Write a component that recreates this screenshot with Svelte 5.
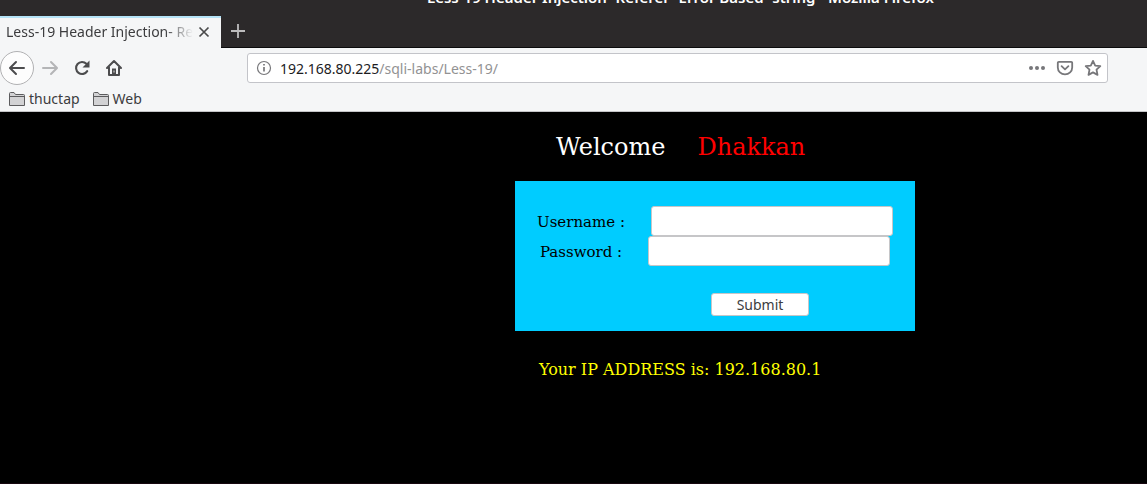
<script lang="ts">
  const bookmarks = ['thuctap', 'Web'];
  let username = $state('');
  let password = $state('');
</script>

<div class="window">
  <header class="titlebar"><span>Less-19 Header Injection- Referer- Error Based- string - Mozilla Firefox</span></header>

  <div class="tabstrip">
    <div class="tab">
      <span class="tab-title">Less-19 Header Injection- Referer</span>
      <button class="icon close" aria-label="Close tab">
        <svg width="14" height="16" viewBox="0 0 14 16"><path d="M2.500 3.500l9 9M11.500 3.500l-9 9" stroke="#4a4a4b" stroke-width="1.7" /></svg>
      </button>
    </div>
    <button class="icon new-tab" aria-label="New tab">
      <svg width="16" height="16" viewBox="0 0 16 16"><path d="M8 1v14M1 8h14" stroke="#bdbcbd" stroke-width="1.8" /></svg>
    </button>
  </div>

  <div class="chrome">
    <div class="toolbar">
      <nav class="nav" aria-label="Navigation">
        <button class="icon back" aria-label="Back">
          <svg width="18" height="18" viewBox="0 0 18 18"><path d="M16 9H2.5M8 3L2 9l6 6" stroke="#4c4c4e" stroke-width="2" stroke-linecap="round" stroke-linejoin="round" /></svg>
        </button>
        <button class="icon" aria-label="Forward">
          <svg width="18" height="18" viewBox="0 0 18 18"><path d="M2 9h13.5M10 3l6 6-6 6" stroke="#b4b5b7" stroke-width="2" stroke-linecap="round" stroke-linejoin="round" /></svg>
        </button>
        <button class="icon" aria-label="Reload">
          <svg width="18" height="18" viewBox="0 0 18 18"><path d="M14.2 12.1A6 6 0 1 1 13.4 4.8" stroke="#4c4c4e" stroke-width="2.1" stroke-linecap="round" /><path d="M16.5 1.5v7h-7z" fill="#4c4c4e" /></svg>
        </button>
        <button class="icon" aria-label="Home">
          <svg width="18" height="18" viewBox="0 0 18 18"><path d="M2 9l7-7 7 7M4 8.5V16h10V8.5" stroke="#4c4c4e" stroke-width="2" stroke-linecap="round" stroke-linejoin="round" /><path d="M7 9.5h4V16H7z" fill="#4c4c4e" /><path d="M9 11.5v2" stroke="#ddd" stroke-width="1" /></svg>
        </button>
      </nav>
      <div class="address">
        <svg width="16" height="16" viewBox="0 0 16 16"><circle cx="8" cy="8" r="6.5" stroke="#77777a" stroke-width="1.2" /><path d="M8 7v4.5M8 4v1.6" stroke="#77777a" stroke-width="1.7" /></svg>
        <span class="url">192.168.80.225<span class="path">/sqli-labs/Less-19/</span></span>
        <button class="icon" aria-label="Page actions">
          <svg width="18" height="18" viewBox="0 0 18 18"><g fill="#77777a"><circle cx="3" cy="9" r="2" /><circle cx="9" cy="9" r="2" /><circle cx="15" cy="9" r="2" /></g></svg>
        </button>
        <button class="icon" aria-label="Save to Pocket">
          <svg width="18" height="18" viewBox="0 0 18 18" stroke="#77777a" stroke-width="1.8" stroke-linejoin="round" stroke-linecap="round"><path d="M2.8 2.9h12.4a1 1 0 0 1 1 1V8.5A7.2 6.9 0 0 1 1.8 8.5V3.9a1 1 0 0 1 1-1z" /><path d="M5.6 7.2L9 10.4l3.4-3.2" /></svg>
        </button>
        <button class="icon" aria-label="Bookmark this page">
          <svg width="18" height="18" viewBox="0 0 18 18"><path d="M9 1.9l2.200 4.700 5.100.6-3.800 3.500 1 5.200L9 13.400l-4.500 2.500 1-5.200L1.700 7.200l5.100-.6z" stroke="#77777a" stroke-width="1.8" stroke-linejoin="round" /></svg>
        </button>
      </div>
    </div>
    <nav class="bookmarks" aria-label="Bookmarks">
      {#each bookmarks as name}
        <button class="bookmark">
          <svg width="16" height="14" viewBox="0 0 16 14"><path d="M.5 13.5V1.5a1 1 0 0 1 1-1H5l1.500 2h8a1 1 0 0 1 1 1v10z" fill="#d2d2d4" stroke="#5c5c5e" /><path d="M1 4.500h14" stroke="#5c5c5e" /></svg>
          {name}
        </button>
      {/each}
    </nav>
  </div>

  <main>
    <div class="content">
      <h1>Welcome <span>Dhakkan</span></h1>
      <form onsubmit={(e) => e.preventDefault()}>
        <div class="field">
          <label for="uname">Username :</label>
          <input id="uname" type="text" bind:value={username} />
        </div>
        <div class="field">
          <label for="passwd">Password :</label>
          <input id="passwd" type="password" bind:value={password} />
        </div>
        <button class="submit" type="submit">Submit</button>
      </form>
      <p>Your IP ADDRESS is: 192.168.80.1</p>
    </div>
  </main>
</div>

<style>
  :global(body) { margin: 0; background: #000; }
  * { box-sizing: border-box; }
  button, input { font: inherit; color: inherit; }
  button { padding: 0; border: 0; background: none; }
  svg { display: block; flex: none; fill: none; }

  .window {
    display: flex;
    flex-direction: column;
    min-height: 100vh;
    font: 14px/20px "Noto Sans", sans-serif;
    color: #3c3c3e;
  }
  .titlebar {
    display: flex;
    align-items: flex-end;
    justify-content: center;
    height: 16px;
    padding: 0 0 9px 214px;
    overflow: hidden;
    background: #2c292a;
    color: #fff;
    font-size: 15px;
    font-weight: 600;
    white-space: nowrap;
  }
  .tabstrip {
    display: flex;
    height: 32px;
    background: #2c292a;
    border-bottom: 1px solid #0c0c0d;
  }
  .tab {
    display: flex;
    align-items: center;
    width: 221px;
    height: 32px;
    padding: 0 10px 2px 6px;
    gap: 4px;
    background: #f5f6f7;
    border-top: 2px solid #b5e3f7;
  }
  .tab-title {
    flex: 1;
    overflow: hidden;
    white-space: nowrap;
    mask-image: linear-gradient(to left, transparent, #000 28px);
  }
  .icon { display: flex; align-items: center; justify-content: center; flex: none; }
  .new-tab { width: 34px; height: 30px; }

  .chrome {
    background: #f5f6f7;
    border-bottom: 1px solid #c3c4c6;
  }
  .toolbar { display: flex; align-items: center; height: 40px; }
  .nav { display: flex; align-items: center; flex: none; width: 247px; }
  .nav .icon { width: 32px; height: 32px; }
  .nav .back {
    width: 34px;
    height: 34px;
    border: 1px solid #b1b1b3;
    border-radius: 50%;
    background: #fdfdfd;
  }
  .address {
    display: flex;
    align-items: center;
    gap: 10px;
    flex: 1;
    height: 30px;
    margin-right: 39px;
    padding: 0 5px 0 8px;
    border: 1px solid #c3c4c9;
    border-radius: 3px;
    background: #fff;
  }
  .url { flex: 1; margin-left: -2px; padding-top: 2px; color: #1c1c1e; }
  .path { color: #929293; }
  .bookmarks { display: flex; gap: 13px; height: 23px; padding: 0 0 2px 9px; }
  .bookmark { display: flex; align-items: center; gap: 4px; }

  main {
    flex: 1;
    display: flex;
    justify-content: center;
    padding-left: 283px;
    background: #000;
    border-bottom: 1px solid #16060e;
    font-family: "DejaVu Serif", serif;
  }
  .content { width: 400px; }
  h1 {
    display: flex;
    gap: 32px;
    margin: 21px 0 19px;
    padding-left: 41px;
    color: #fff;
    font-size: 24px;
    line-height: 29px;
    font-weight: 400;
  }
  h1 span { color: #f00; }
  form {
    display: flex;
    flex-direction: column;
    align-items: center;
    height: 150px;
    padding-top: 25px;
    background: #0cf;
    color: #000;
  }
  .field { display: flex; align-items: center; gap: 26px; font-size: 15px; }
  .field label { padding-top: 2px; }
  .field input {
    width: 242px;
    height: 30px;
    padding: 0 8px;
    border: 1px solid #c6c6c8;
    border-radius: 3px;
    background: #fff;
  }
  .submit {
    width: 98px;
    height: 23px;
    margin: 27px 0 0 90px;
    border: 1px solid #c6c6c8;
    border-radius: 3px;
    background: #fff;
    color: #3c3c3e;
    font-family: "Noto Sans", sans-serif;
  }
  p {
    margin: 29px 0;
    padding-left: 24px;
    color: #ff0;
    font-size: 16px;
    line-height: 20px;
  }
</style>
